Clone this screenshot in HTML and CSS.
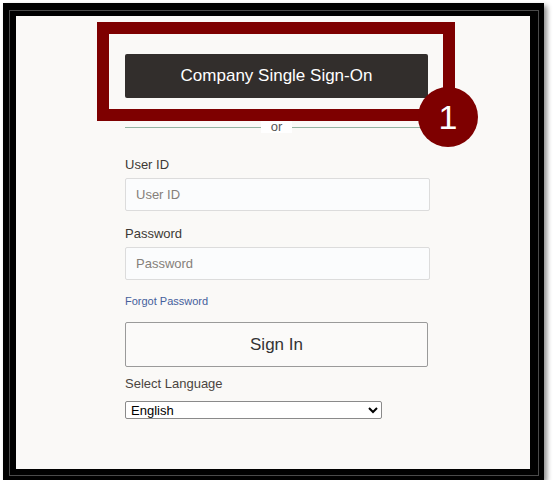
FILE: index.html
```html
<!DOCTYPE html>
<html>
<head>
<meta charset="utf-8">
<link rel="stylesheet" href="styles.css">
</head>
<body>
<div class="frame">
  <div class="line">
    <div class="panel">
      <form class="form">
        <button type="button" class="sso">Company Single Sign-On</button>
        <div class="divider"><span class="rule"></span><span class="or">or</span><span class="rule"></span></div>
        <label class="label" for="uid">User ID</label>
        <input class="field" id="uid" type="text" placeholder="User ID">
        <label class="label" for="pwd">Password</label>
        <input class="field" id="pwd" type="password" placeholder="Password">
        <a class="forgot" href="#">Forgot Password</a>
        <button type="button" class="signin">Sign In</button>
        <div class="label lang-label">Select Language</div>
        <select class="lang"><option>English</option></select>
      </form>
      <div class="callout"></div>
      <div class="badge">1</div>
    </div>
  </div>
</div>
</body>
</html>
```

FILE: styles.css
```css
html, body {
  margin: 0;
  padding: 0;
  background: #ffffff;
}

body {
  font-family: "Liberation Sans", Arial, sans-serif;
}

.frame {
  margin: 3px 0 0 3px;
  width: 541px;
  height: 477px;
  box-sizing: border-box;
  padding: 7px 5px 4px 6px;
  background: #000;
  box-shadow: 3px 3px 5px rgba(0, 0, 0, 0.45);
}

.line {
  height: 100%;
  box-sizing: border-box;
  border: 1px solid #4a4a4a;
  padding: 5px 8px 6px 6px;
}

.panel {
  position: relative;
  height: 100%;
  background: #faf9f7;
  overflow: hidden;
}

.form {
  display: flex;
  flex-direction: column;
  align-items: flex-start;
  width: 304px;
  padding: 38px 0 0 109px;
  margin: 0;
}

.sso {
  width: 303px;
  height: 44px;
  margin: 0;
  border: none;
  border-radius: 2px;
  background: #322e2c;
  color: #ffffff;
  font-family: "Liberation Sans", Arial, sans-serif;
  font-size: 17px;
  padding: 0;
}

.divider {
  display: flex;
  align-items: center;
  width: 303px;
  height: 14px;
  margin-top: 22px;
}

.rule {
  flex: 1;
  height: 1px;
  background: #93b3a2;
}

.or {
  padding: 0 10px;
  background: #ffffff;
  color: #555;
  font-size: 13px;
  line-height: 12px;
}

.label {
  display: block;
  font-size: 13px;
  line-height: 15px;
  color: #3d3935;
  margin-top: 23px;
  margin-bottom: 6px;
}

.field + .label {
  margin-top: 15px;
}

.field {
  width: 305px;
  height: 33px;
  box-sizing: border-box;
  margin: 0;
  border: 1px solid #dcdcdc;
  border-radius: 2px;
  background: #fbfcfd;
  padding: 0 10px;
  font-family: "Liberation Sans", Arial, sans-serif;
  font-size: 13px;
  color: #333;
}

.field::placeholder {
  color: #85807a;
}

.forgot {
  display: block;
  margin-top: 15px;
  font-size: 11px;
  line-height: 13px;
  color: #45609c;
  text-decoration: none;
}

.signin {
  width: 303px;
  height: 45px;
  margin: 14px 0 0 0;
  border: 1px solid #9a9a9a;
  border-radius: 2px;
  background: #fbfaf9;
  color: #333;
  font-family: "Liberation Sans", Arial, sans-serif;
  font-size: 17px;
  padding: 0;
}

.lang-label {
  margin-top: 9px;
  margin-bottom: 10px;
  color: #4a4541;
}

.lang {
  width: 257px;
  height: 18px;
  margin: 0;
  font-family: "Liberation Sans", Arial, sans-serif;
  font-size: 13px;
  color: #000;
  border: 1px solid #8a8a8a;
  border-radius: 2px;
  background: #fff;
  padding: 0 1px;
}

.callout {
  position: absolute;
  left: 81px;
  top: 6px;
  width: 358px;
  height: 99px;
  box-sizing: border-box;
  border: 12px solid #7e0000;
}

.badge {
  position: absolute;
  left: 402px;
  top: 71px;
  width: 60px;
  height: 60px;
  border-radius: 50%;
  background: #7e0000;
  color: #ffffff;
  font-size: 34px;
  line-height: 60px;
  text-align: center;
}
```
